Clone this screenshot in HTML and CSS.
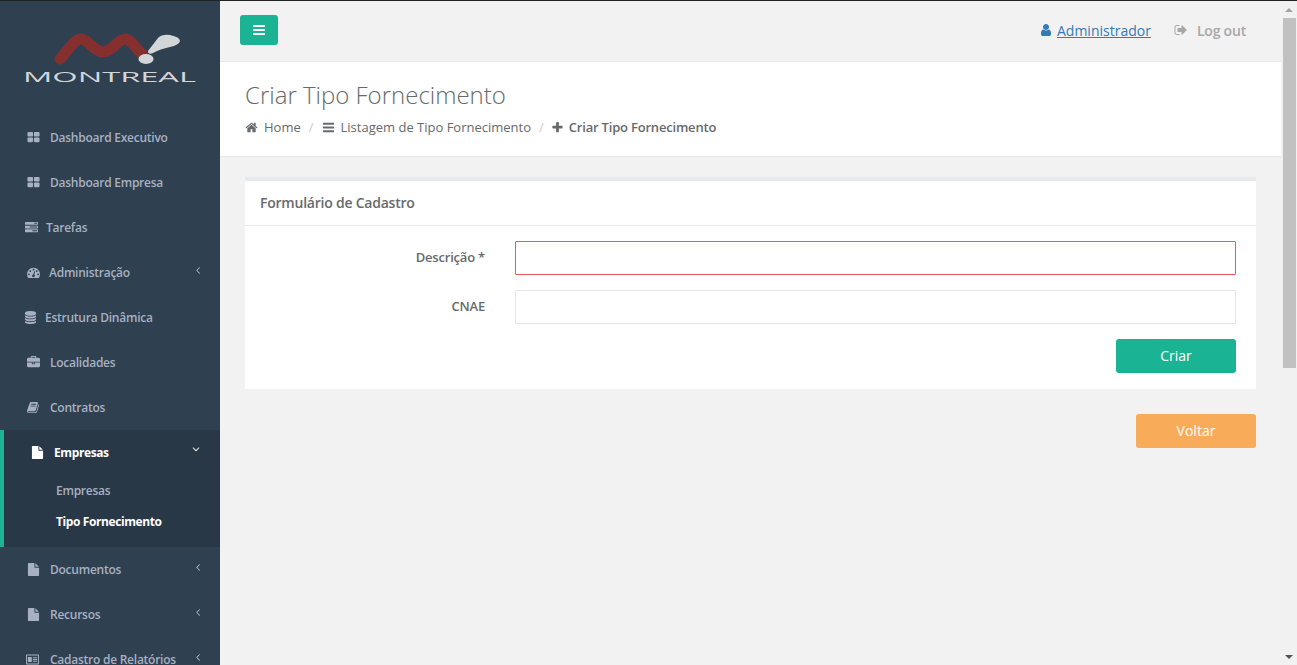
FILE: index.html
```html
<!DOCTYPE html>
<html lang="en">
<head>
  <meta charset="UTF-8" />
  <title>Criar Tipo Fornecimento</title>
  <link rel="stylesheet" href="styles.css">
</head>
<body>

<svg class="defs" width="0" height="0">
  <symbol id="i-th" viewBox="0 0 1792 1792"><path d="M832 1024v384q0 52-38 90t-90 38h-512q-52 0-90-38t-38-90v-384q0-52 38-90t90-38h512q52 0 90 38t38 90zm0-768v384q0 52-38 90t-90 38h-512q-52 0-90-38t-38-90v-384q0-52 38-90t90-38h512q52 0 90 38t38 90zm896 768v384q0 52-38 90t-90 38h-512q-52 0-90-38t-38-90v-384q0-52 38-90t90-38h512q52 0 90 38t38 90zm0-768v384q0 52-38 90t-90 38h-512q-52 0-90-38t-38-90v-384q0-52 38-90t90-38h512q52 0 90 38t38 90z"/></symbol>
  <symbol id="i-tasks" viewBox="0 0 1792 1792"><path d="M1024 1408h640v-128h-640v128zm-384-512h1024v-128h-1024v128zm640-512h384v-128h-384v128zm512 832v256q0 26-19 45t-45 19h-1664q-26 0-45-19t-19-45v-256q0-26 19-45t45-19h1664q26 0 45 19t19 45zm0-512v256q0 26-19 45t-45 19h-1664q-26 0-45-19t-19-45v-256q0-26 19-45t45-19h1664q26 0 45 19t19 45zm0-512v256q0 26-19 45t-45 19h-1664q-26 0-45-19t-19-45v-256q0-26 19-45t45-19h1664q26 0 45 19t19 45z"/></symbol>
  <symbol id="i-gauge" viewBox="0 0 1792 1792"><path d="M384 1152q0-53-37.5-90.5t-90.5-37.5-90.5 37.5-37.5 90.5 37.5 90.5 90.5 37.5 90.5-37.5 37.5-90.5zm192-448q0-53-37.5-90.5t-90.5-37.5-90.5 37.5-37.5 90.5 37.5 90.5 90.5 37.5 90.5-37.5 37.5-90.5zm428 481l101-382q6-26-7.5-48.5t-38.5-29.5-48 6.5-30 39.5l-101 382q-60 5-107 43.5t-63 98.5q-20 77 20 146t117 89 146-20 89-117q16-60-6-117t-72-91zm660-33q0-53-37.5-90.5t-90.5-37.5-90.5 37.5-37.5 90.5 37.5 90.5 90.5 37.5 90.5-37.5 37.5-90.5zm-640-640q0-53-37.5-90.5t-90.5-37.5-90.5 37.5-37.5 90.5 37.5 90.5 90.5 37.5 90.5-37.5 37.5-90.5zm448 192q0-53-37.5-90.5t-90.5-37.5-90.5 37.5-37.5 90.5 37.5 90.5 90.5 37.5 90.5-37.5 37.5-90.5zm320 448q0 261-141 483-19 29-54 29h-1402q-35 0-54-29-141-221-141-483 0-182 71-348t191-286 286-191 348-71 348 71 286 191 191 286 71 348z"/></symbol>
  <symbol id="i-db" viewBox="0 0 1792 1792"><path d="M896 768q237 0 443-43t325-127v170q0 69-103 128t-280 93.5-385 34.5-385-34.5-280-93.5-103-128v-170q119 84 325 127t443 43zm0 768q237 0 443-43t325-127v170q0 69-103 128t-280 93.5-385 34.5-385-34.5-280-93.5-103-128v-170q119 84 325 127t443 43zm0-384q237 0 443-43t325-127v170q0 69-103 128t-280 93.5-385 34.5-385-34.5-280-93.5-103-128v-170q119 84 325 127t443 43zm0-1152q208 0 385 34.5t280 93.5 103 128v128q0 69-103 128t-280 93.5-385 34.5-385-34.5-280-93.5-103-128v-128q0-69 103-128t280-93.5 385-34.5z"/></symbol>
  <symbol id="i-case" viewBox="0 0 1792 1792"><path d="M640 256h512v-128h-512v128zm1152 640v480q0 66-47 113t-113 47h-1472q-66 0-113-47t-47-113v-480h672v160q0 26 19 45t45 19h320q26 0 45-19t19-45v-160h672zm-768 0v128h-256v-128h256zm768-480v384h-1792v-384q0-66 47-113t113-47h352v-160q0-40 28-68t68-28h576q40 0 68 28t28 68v160h352q66 0 113 47t47 113z"/></symbol>
  <symbol id="i-book" viewBox="0 0 1792 1792"><path d="M1639 478q40 57 18 129l-275 906q-19 64-76.5 107.5t-122.5 43.5h-923q-77 0-148.5-53.5t-99.5-131.5q-24-67-2-127 0-4 3-27t4-37q1-8-3-21.5t-3-19.5q2-11 8-21t16.5-23.5 16.5-23.5q23-38 45-91.5t30-91.5q3-10 .5-30t-.5-28q3-11 17-28t17-23q21-36 42-92t25-90q1-9-2.5-32t.5-28q4-13 22-30.5t22-22.5q19-26 42.5-84.5t27.5-96.5q1-8-3-25.5t-2-26.5q2-8 9-18t18-23 17-21q8-12 16.5-30.5t15-35 16-36 19.5-32 26.5-23.5 36-11.5 47.5 5.5l-1 3q38-9 51-9h761q74 0 114 56t18 130l-274 906q-36 119-71.5 153.5t-128.5 34.5h-869q-27 0-38 15-11 16-1 43 24 70 144 70h923q29 0 56-15.5t35-41.5l300-987q7-22 5-57 38 15 59 43zm-1064 2q-4 13 2 22.5t20 9.5h608q13 0 25.5-9.5t16.5-22.5l21-64q4-13-2-22.5t-20-9.5h-608q-13 0-25.5 9.5t-16.5 22.5zm-83 256q-4 13 2 22.5t20 9.5h608q13 0 25.5-9.5t16.5-22.5l21-64q4-13-2-22.5t-20-9.5h-608q-13 0-25.5 9.5t-16.5 22.5z"/></symbol>
  <symbol id="i-file" viewBox="0 0 1792 1792"><path d="M1152 512v-472q22 14 36 28l408 408q14 14 28 36h-472zm-128 32q0 40 28 68t68 28h544v1056q0 40-28 68t-68 28h-1344q-40 0-68-28t-28-68v-1600q0-40 28-68t68-28h800v544z"/></symbol>
  <symbol id="i-card" viewBox="0 0 18 14"><path fill-rule="evenodd" d="M1 0h16a1 1 0 0 1 1 1v12a1 1 0 0 1-1 1H1a1 1 0 0 1-1-1V1a1 1 0 0 1 1-1zm.3 1.300v11.400h15.400V1.300zM2.500 3.500h5.500v7H2.500zM9.500 4h6v1.300h-6zM9.500 6.400h6v1.300h-6zM9.500 8.800h6v1.300h-6z"/></symbol>
  <symbol id="i-left" viewBox="0 0 1792 1792"><path d="M1203 544q0 13-10 23l-393 393 393 393q10 10 10 23t-10 23l-50 50q-10 10-23 10t-23-10l-466-466q-10-10-10-23t10-23l466-466q10-10 23-10t23 10l50 50q10 10 10 23z"/></symbol>
  <symbol id="i-down" viewBox="0 0 1792 1792"><path d="M1395 736q0 13-10 23l-466 466q-10 10-23 10t-23-10l-466-466q-10-10-10-23t10-23l50-50q10-10 23-10t23 10l393 393 393-393q10-10 23-10t23 10l50 50q10 10 10 23z"/></symbol>
  <symbol id="i-bars" viewBox="0 0 1792 1792"><path d="M1664 1344v128q0 26-19 45t-45 19h-1408q-26 0-45-19t-19-45v-128q0-26 19-45t45-19h1408q26 0 45 19t19 45zm0-512v128q0 26-19 45t-45 19h-1408q-26 0-45-19t-19-45v-128q0-26 19-45t45-19h1408q26 0 45 19t19 45zm0-512v128q0 26-19 45t-45 19h-1408q-26 0-45-19t-19-45v-128q0-26 19-45t45-19h1408q26 0 45 19t19 45z"/></symbol>
  <symbol id="i-plus" viewBox="0 0 1792 1792"><path d="M1600 736v192q0 40-28 68t-68 28h-416v416q0 40-28 68t-68 28h-192q-40 0-68-28t-28-68v-416h-416q-40 0-68-28t-28-68v-192q0-40 28-68t68-28h416v-416q0-40 28-68t68-28h192q40 0 68 28t28 68v416h416q40 0 68 28t28 68z"/></symbol>
  <symbol id="i-home" viewBox="0 0 1792 1792"><path d="M1472 992v480q0 26-19 45t-45 19h-384v-384h-256v384h-384q-26 0-45-19t-19-45v-480q0-1 .5-3t.5-3l575-474 575 474q1 2 1 6zm223-69l-62 74q-8 9-21 11h-3q-13 0-21-7l-692-577-692 577q-12 8-24 7-13-2-21-11l-62-74q-8-10-7-23.500t11-21.500l719-599q32-26 76-26t76 26l244 204v-195q0-14 9-23t23-9h192q14 0 23 9t9 23v408l219 182q10 8 11 21.500t-7 23.500z"/></symbol>
  <symbol id="i-user" viewBox="0 0 1792 1792"><path d="M1536 1399q0 109-62.500 187t-150.500 78h-854q-88 0-150.500-78t-62.500-187q0-85 8.500-160.500t31.500-152 58.500-131 94-89 134.500-34.500q131 128 313 128t313-128q76 0 134.500 34.500t94 89 58.500 131 31.500 152 8.500 160.500zm-256-887q0 159-112.500 271.500t-271.500 112.500-271.500-112.500-112.500-271.500 112.500-271.500 271.500-112.500 271.500 112.500 112.500 271.500z"/></symbol>
  <symbol id="i-out" viewBox="0 0 1792 1792"><path d="M704 1440q0 4 1 20t.5 26.500-3 23.500-10 19.500-20.500 6.500h-320q-119 0-203.500-84.500t-84.500-203.500v-704q0-119 84.500-203.500t203.500-84.500h320q13 0 22.500 9.500t9.500 22.500q0 4 1 20t.5 26.500-3 23.500-10 19.500-20.500 6.500h-320q-66 0-113 47t-47 113v704q0 66 47 113t113 47h312l11.500 1 11.500 3 8 5.500 7 9 2 13.500zm928-544q0 26-19 45l-544 544q-19 19-45 19t-45-19-19-45v-288h-448q-26 0-45-19t-19-45v-384q0-26 19-45t45-19h448v-288q0-26 19-45t45-19 45 19l544 544q19 19 19 45z"/></symbol>
</svg>

<div class="wrapper">
  <nav class="sidebar">
    <div class="logo">
      <svg width="220" height="113" viewBox="0 0 220 113">
        <path class="logo-m" d="M60 58 C68 50 74 38 81 38 C88 38 94 51 103 51 C112 51 118 38 125 38 C131 38 137 49 143 54"/>
        <path class="logo-mark" d="M148 50 L158 37 Q162 33 170 34 Q180 36 180 40 Q179 44 170 46 Q160 48 153 52 Q148 54 148 50 Z"/>
        <ellipse class="logo-mark" cx="146" cy="58" rx="7.500" ry="5"/>
        <text class="logo-text" x="23" y="81" textLength="173" lengthAdjust="spacingAndGlyphs">MONTREAL</text>
      </svg>
    </div>
    <ul class="menu">
      <li class="item"><a class="link pad-27"><svg class="ic"><use href="#i-th"/></svg><span class="gap-10">Dashboard Executivo</span></a></li>
      <li class="item"><a class="link pad-27"><svg class="ic"><use href="#i-th"/></svg><span class="gap-10">Dashboard Empresa</span></a></li>
      <li class="item"><a class="link pad-25"><svg class="ic"><use href="#i-tasks"/></svg><span class="gap-8">Tarefas</span></a></li>
      <li class="item"><a class="link pad-27"><svg class="ic"><use href="#i-gauge"/></svg><span class="gap-9">Administração</span><svg class="caret"><use href="#i-left"/></svg></a></li>
      <li class="item"><a class="link pad-24"><svg class="ic"><use href="#i-db"/></svg><span class="gap-8">Estrutura Dinâmica</span></a></li>
      <li class="item"><a class="link pad-27"><svg class="ic"><use href="#i-case"/></svg><span class="gap-10">Localidades</span></a></li>
      <li class="item"><a class="link pad-27"><svg class="ic"><use href="#i-book"/></svg><span class="gap-10">Contratos</span></a></li>
      <li class="item active">
        <a class="link pad-27"><svg class="ic"><use href="#i-file"/></svg><span class="gap-10">Empresas</span><svg class="caret"><use href="#i-down"/></svg></a>
        <ul class="submenu">
          <li>Empresas</li>
          <li class="current">Tipo Fornecimento</li>
        </ul>
      </li>
      <li class="item"><a class="link pad-27"><svg class="ic"><use href="#i-file"/></svg><span class="gap-10">Documentos</span><svg class="caret"><use href="#i-left"/></svg></a></li>
      <li class="item"><a class="link pad-27"><svg class="ic"><use href="#i-file"/></svg><span class="gap-10">Recursos</span><svg class="caret"><use href="#i-left"/></svg></a></li>
      <li class="item"><a class="link pad-26"><svg class="ic ic-card"><use href="#i-card"/></svg><span class="gap-11">Cadastro de Relatórios</span><svg class="caret"><use href="#i-left"/></svg></a></li>
    </ul>
  </nav>

  <div class="main">
    <header class="topbar">
      <button class="toggle"><svg class="toggle-ic"><use href="#i-bars"/></svg></button>
      <div class="top-links">
        <a class="user"><svg class="ic"><use href="#i-user"/></svg>Administrador</a>
        <a class="logout"><svg class="ic"><use href="#i-out"/></svg>Log out</a>
      </div>
    </header>

    <section class="heading">
      <h2>Criar Tipo Fornecimento</h2>
      <ol class="crumbs">
        <li><svg class="ic"><use href="#i-home"/></svg>Home</li>
        <li class="sep">/</li>
        <li><svg class="ic"><use href="#i-bars"/></svg>Listagem de Tipo Fornecimento</li>
        <li class="sep">/</li>
        <li class="here"><svg class="ic"><use href="#i-plus"/></svg>Criar Tipo Fornecimento</li>
      </ol>
    </section>

    <section class="content">
      <div class="box">
        <h5 class="box-title">Formulário de Cadastro</h5>
        <form class="box-body">
          <div class="row">
            <label>Descrição *</label>
            <input type="text" class="invalid">
          </div>
          <div class="row">
            <label>CNAE</label>
            <input type="text">
          </div>
          <div class="actions">
            <button type="button" class="btn btn-green">Criar</button>
          </div>
        </form>
      </div>
      <div class="actions back">
        <button type="button" class="btn btn-orange">Voltar</button>
      </div>
    </section>
  </div>

  <div class="scrollbar">
    <span class="arrow-up"></span>
    <div class="thumb"></div>
    <span class="arrow-down"></span>
  </div>
</div>

</body>
</html>
```
FILE: styles.css
```css
html, body {
  height: 100%;
}
body {
  margin: 0;
  overflow: hidden;
  font-family: "Open Sans", Arial, sans-serif;
  font-size: 13px;
  color: #676a6c;
  background-color: #f2f2f2;
}
ul, ol {
  list-style: none;
  margin: 0;
  padding: 0;
}
.defs {
  display: block;
  height: 0;
}
.ic {
  width: 13px;
  height: 13px;
  fill: currentColor;
  flex: none;
}
.wrapper {
  display: flex;
  height: 664px;
  border-top: 1px solid #222;
  overflow: hidden;
}

/* sidebar */
.sidebar {
  width: 220px;
  flex: none;
  background-color: #2f4050;
  overflow: hidden;
}
.logo {
  height: 114px;
}
.logo svg {
  display: block;
}
.logo-m {
  fill: none;
  stroke: #85302f;
  stroke-width: 11;
  stroke-linecap: round;
}
.logo-mark {
  fill: #d3d6d9;
}
.logo-text {
  font-family: "Open Sans", sans-serif;
  font-weight: 400;
  font-size: 14px;
  fill: #d3d6d9;
}
.link {
  display: flex;
  align-items: center;
  height: 45px;
  position: relative;
  color: #a7b1c2;
  font-size: 12px;
  font-weight: 600;
  letter-spacing: -0.25px;
}
.pad-24 { padding-left: 24px; }
.pad-25 { padding-left: 25px; }
.pad-26 { padding-left: 26px; }
.pad-27 { padding-left: 27px; }
.gap-8 { margin-left: 8px; }
.gap-9 { margin-left: 9px; }
.gap-10 { margin-left: 10px; }
.gap-11 { margin-left: 11px; }
.ic-card {
  width: 13px;
  height: 11px;
}
.caret {
  position: absolute;
  right: 16px;
  top: 14px;
  width: 12px;
  height: 12px;
  fill: currentColor;
}
.active {
  background-color: #293846;
  border-left: 4px solid #1ab394;
  height: 117px;
  box-sizing: border-box;
}
.active .link {
  color: #fff;
  font-weight: 700;
  letter-spacing: -0.4px;
}
.active .caret {
  right: 18px;
  top: 13px;
}
.submenu {
  padding-left: 52px;
  font-size: 12px;
  font-weight: 600;
  letter-spacing: -0.25px;
  color: #a7b1c2;
}
.submenu li {
  height: 31px;
  line-height: 31px;
}
.submenu .current {
  color: #fff;
  font-weight: 700;
  letter-spacing: -0.4px;
}

/* top */
.main {
  flex: 1;
  min-width: 0;
}
.topbar {
  height: 58px;
  padding: 0 35px 2px 20px;
  border-bottom: 1px solid #e7eaec;
  display: flex;
  align-items: center;
  justify-content: space-between;
}
.toggle {
  width: 38px;
  height: 30px;
  border: 0;
  border-radius: 3px;
  padding: 0;
  background-color: #1ab394;
  display: flex;
  align-items: center;
  justify-content: center;
}
.toggle-ic {
  width: 14px;
  height: 14px;
  fill: #fff;
}
.top-links {
  display: flex;
  align-items: center;
  font-size: 14px;
}
.user {
  display: flex;
  align-items: center;
  color: #337ab7;
  text-decoration: underline;
}
.user .ic {
  width: 14px;
  height: 14px;
  margin-right: 4px;
}
.logout {
  display: flex;
  align-items: center;
  margin-left: 23px;
  color: #a7a7a7;
  font-weight: 600;
  letter-spacing: -0.2px;
}
.logout .ic {
  width: 14px;
  height: 14px;
  margin-right: 9px;
}

/* heading */
.heading {
  height: 95px;
  box-sizing: border-box;
  background-color: #fff;
  border-bottom: 1px solid #e7eaec;
  padding: 16px 25px 0;
}
.heading h2 {
  margin: 0;
  font-size: 24px;
  font-weight: 300;
  line-height: 33px;
}
.crumbs {
  display: flex;
  align-items: center;
  margin-top: 6px;
  line-height: 20px;
}
.crumbs li {
  display: flex;
  align-items: center;
}
.crumbs .ic {
  margin-right: 6px;
}
.crumbs .sep {
  color: #ccc;
  margin: 0 8px;
}
.crumbs .here {
  font-weight: 600;
  letter-spacing: -0.2px;
}
.crumbs .here .ic {
  margin-left: -1px;
  margin-right: 5px;
}

/* form */
.content {
  padding: 20px 25px 0;
}
.box {
  background-color: #fff;
  border-top: 4px solid #e7eaec;
}
.box-title {
  margin: 0;
  height: 45px;
  line-height: 43px;
  padding: 0 15px;
  font-size: 14px;
  font-weight: 600;
  letter-spacing: -0.23px;
  border-bottom: 1px solid #e7eaec;
  box-sizing: border-box;
}
.box-body {
  display: flex;
  flex-direction: column;
  gap: 15px;
  padding: 15px 20px 16px 0;
}
.row {
  display: flex;
  gap: 30px;
}
.row label {
  width: 240px;
  flex: none;
  text-align: right;
  line-height: 32px;
  font-weight: 600;
  letter-spacing: -0.2px;
}
.row input {
  flex: 1;
  height: 34px;
  box-sizing: border-box;
  border: 1px solid #e5e6e7;
  border-radius: 1px;
  padding: 6px 12px;
  background-color: #fff;
  outline: none;
}
.row input.invalid {
  border-color: #ed5565;
}
.actions {
  display: flex;
  justify-content: flex-end;
}
.back {
  margin-top: 25px;
}
.btn {
  width: 120px;
  height: 34px;
  border: 0;
  border-radius: 3px;
  padding: 0 0 2px;
  color: #fff;
  font-family: inherit;
  font-size: 14px;
}
.btn-green {
  background-color: #1ab394;
}
.btn-orange {
  background-color: #f8ac59;
}

/* page scrollbar */
.scrollbar {
  width: 16px;
  flex: none;
  background-color: #f1f1f1;
  display: flex;
  flex-direction: column;
  align-items: flex-end;
  position: relative;
}
.thumb {
  width: 13px;
  height: 350px;
  margin: 6px 1px 0 0;
  background-color: #c1c1c1;
}
.arrow-up {
  width: 0;
  height: 0;
  margin: 7px 4px 0 0;
  border: 4px solid transparent;
  border-top: 0;
  border-bottom: 4px solid #a3a3a3;
}
.arrow-down {
  position: absolute;
  right: 4px;
  bottom: 6px;
  width: 0;
  height: 0;
  border: 4px solid transparent;
  border-bottom: 0;
  border-top: 4px solid #505050;
}
```
